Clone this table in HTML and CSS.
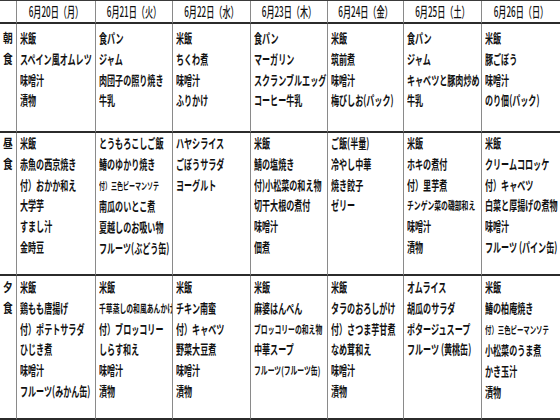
FILE: index.html
```html
<!DOCTYPE html>
<html lang="ja">
<head>
<meta charset="utf-8">
<title>献立表</title>
<link rel="stylesheet" href="styles.css">
</head>
<body>
<div class="menu">
  <div class="cell head lab"></div>
  <div class="cell head"><div class="t">6月20日（月）</div></div>
  <div class="cell head"><div class="t">6月21日（火）</div></div>
  <div class="cell head"><div class="t">6月22日（水）</div></div>
  <div class="cell head"><div class="t">6月23日（木）</div></div>
  <div class="cell head"><div class="t">6月24日（金）</div></div>
  <div class="cell head"><div class="t">6月25日（土）</div></div>
  <div class="cell head last"><div class="t">6月26日（日）</div></div>

  <div class="cell lab r1"><div class="t">朝<br>食</div></div>
  <div class="cell r1"><div class="t">米飯<br>スペイン風オムレツ<br>味噌汁<br>漬物</div></div>
  <div class="cell r1"><div class="t">食パン<br>ジャム<br>肉団子の照り焼き<br>牛乳</div></div>
  <div class="cell r1"><div class="t">米飯<br>ちくわ煮<br>味噌汁<br>ふりかけ</div></div>
  <div class="cell r1"><div class="t">食パン<br>マーガリン<br>スクランブルエッグ<br>コーヒー牛乳</div></div>
  <div class="cell r1"><div class="t">米飯<br>筑前煮<br>味噌汁<br>梅びしお(パック)</div></div>
  <div class="cell r1"><div class="t">食パン<br>ジャム<br>キャベツと豚肉炒め<br>牛乳</div></div>
  <div class="cell r1 last"><div class="t">米飯<br>豚ごぼう<br>味噌汁<br>のり佃(パック)</div></div>

  <div class="cell lab r2"><div class="t">昼<br>食</div></div>
  <div class="cell r2"><div class="t">米飯<br>赤魚の西京焼き<br>付）おかか和え<br>大学芋<br>すまし汁<br>金時豆</div></div>
  <div class="cell r2"><div class="t">とうもろこしご飯<br>鰆のゆかり焼き<br><span class="xs">付）三色ピーマンソテ</span><br>南瓜のいとこ煮<br>夏越しのお吸い物<br>フルーツ(ぶどう缶)</div></div>
  <div class="cell r2"><div class="t">ハヤシライス<br>ごぼうサラダ<br>ヨーグルト</div></div>
  <div class="cell r2"><div class="t">米飯<br>鯖の塩焼き<br>付)小松菜の和え物<br>切干大根の煮付<br>味噌汁<br>佃煮</div></div>
  <div class="cell r2"><div class="t">ご飯(半量)<br>冷やし中華<br>焼き餃子<br>ゼリー</div></div>
  <div class="cell r2"><div class="t">米飯<br>ホキの煮付<br>付）里芋煮<br><span class="s">チンゲン菜の磯部和え</span><br>味噌汁<br>漬物</div></div>
  <div class="cell r2 last"><div class="t">米飯<br>クリームコロッケ<br>付）キャベツ<br>白菜と厚揚げの煮物<br>味噌汁<br>フルーツ (パイン缶)</div></div>

  <div class="cell lab r3"><div class="t">夕<br>食</div></div>
  <div class="cell r3"><div class="t">米飯<br>鶏もも唐揚げ<br>付）ポテトサラダ<br>ひじき煮<br>味噌汁<br>フルーツ(みかん缶)</div></div>
  <div class="cell r3"><div class="t">米飯<br><span class="s">千草蒸しの和風あんかけ</span><br>付）ブロッコリー<br>しらす和え<br>味噌汁<br>漬物</div></div>
  <div class="cell r3"><div class="t">米飯<br>チキン南蛮<br>付）キャベツ<br>野菜大豆煮<br>味噌汁<br>漬物</div></div>
  <div class="cell r3"><div class="t">米飯<br>麻婆はんぺん<br><span class="s">ブロッコリーの和え物</span><br>中華スープ<br><span class="s">フルーツ(フルーツ缶)</span></div></div>
  <div class="cell r3"><div class="t">米飯<br>タラのおろしがけ<br>付）さつま芋甘煮<br>なめ茸和え<br>味噌汁<br>漬物</div></div>
  <div class="cell r3"><div class="t">オムライス<br>胡瓜のサラダ<br>ポタージュスープ<br>フルーツ (黄桃缶)</div></div>
  <div class="cell r3 last"><div class="t">米飯<br>鰆の柏庵焼き<br><span class="xs2">付）三色ピーマンソテ</span><br>小松菜のうま煮<br>かき玉汁<br>漬物</div></div>
</div>
</body>
</html>
```

FILE: styles.css
```css
html, body {
  margin: 0;
  padding: 0;
  background: #ffffff;
}

body {
  font-family: "Noto Sans CJK JP", "Noto Sans", sans-serif;
  color: #111111;
}

.menu {
  display: grid;
  grid-template-columns: 17px 79px 77px 78px 77px 76px 78px 78px;
  grid-template-rows: 23px 109px 143px 144px;
  width: 560px;
  height: 420px;
  box-sizing: border-box;
  border-top: 1px solid #3a3a3a;
}

.cell {
  box-sizing: border-box;
  border-right: 1px solid #8a8a8a;
  border-bottom: 2px solid #2b2b2b;
  overflow: hidden;
  padding-left: 3px;
}

.cell.last {
  border-right: none;
}

.t {
  width: calc(100% / 0.62);
  transform: scaleX(0.62);
  transform-origin: 0 0;
  white-space: nowrap;
  font-size: 13px;
  font-weight: 700;
  line-height: 20.8px;
}

.head {
  padding-left: 0;
}

.head .t {
  width: calc(100% / 0.58);
  transform: scaleX(0.58);
  text-align: center;
  font-weight: 500;
  line-height: 21px;
  font-size: 14px;
}

.r1 { padding-top: 4px; }
.r2 { padding-top: 0; }
.r3 { padding-top: 1px; }

.lab {
  padding-left: 0;
}

.lab .t {
  width: calc(100% / 0.78);
  transform: scaleX(0.78);
  text-align: center;
  font-size: 12.5px;
}

.s {
  font-size: 11px;
}

.xs {
  font-size: 9.7px;
}

.xs2 {
  font-size: 10.3px;
}
```
